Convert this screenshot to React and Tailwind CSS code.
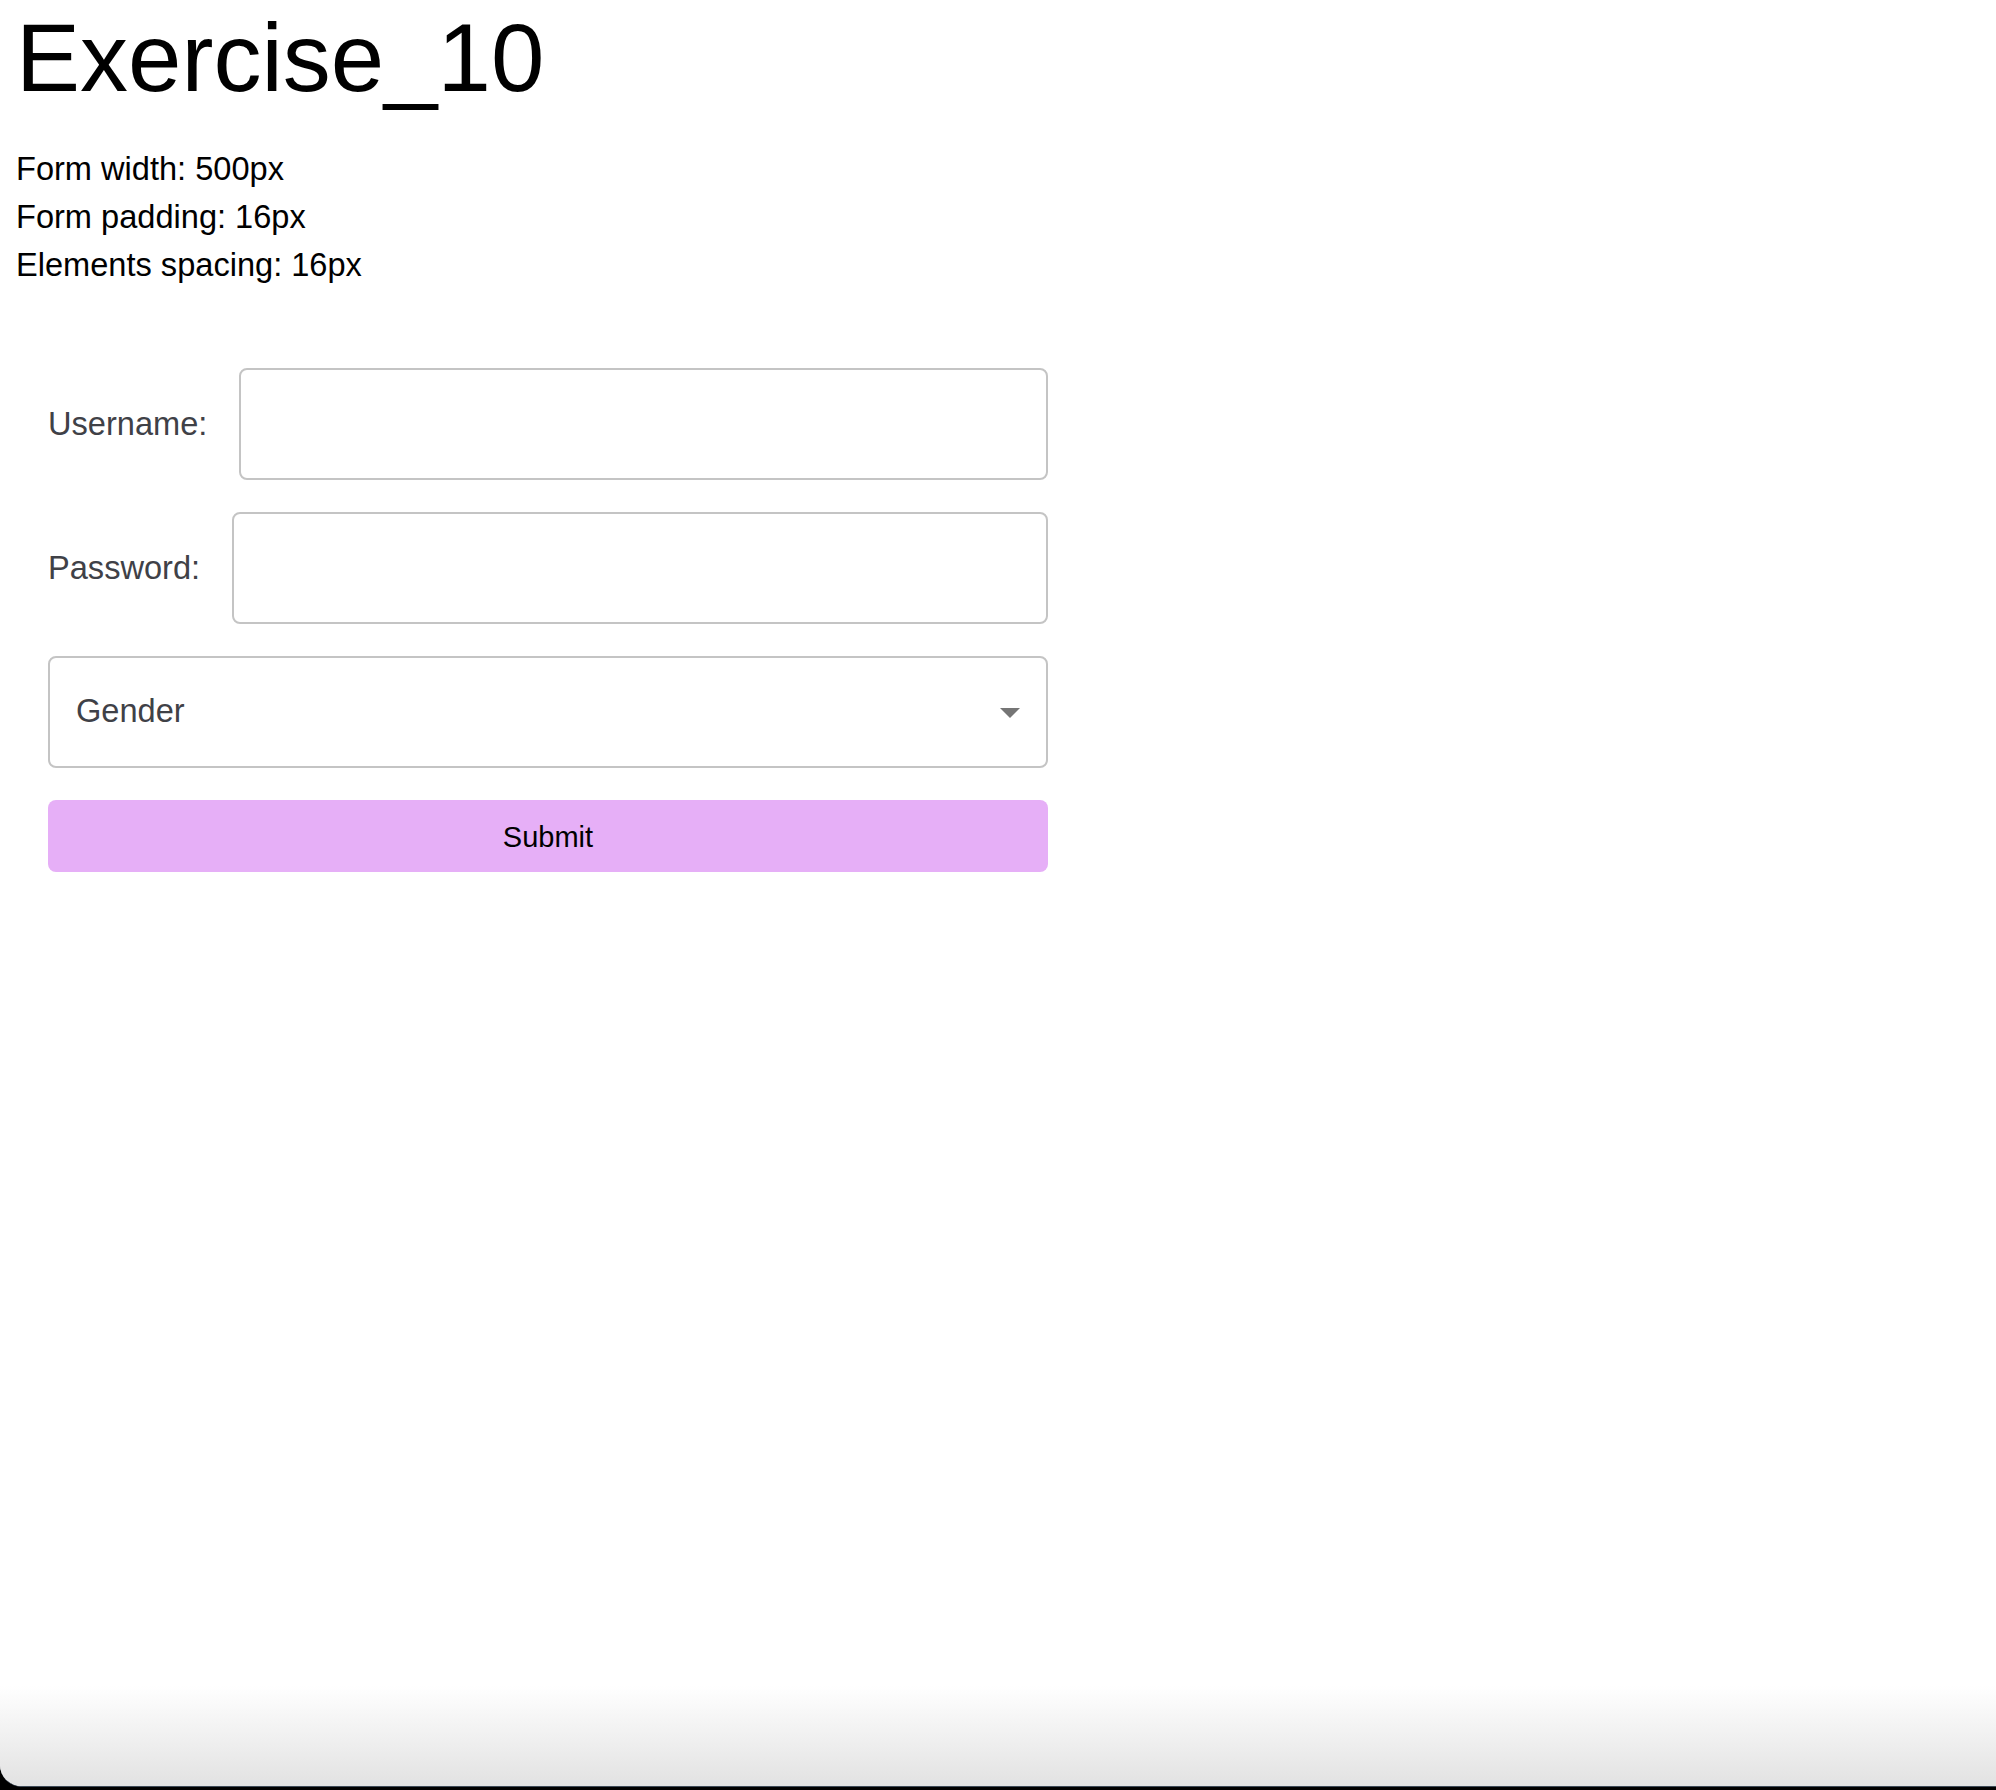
export default function App() {
  return (
    <div className="h-[1790px] flex flex-col bg-black font-['Liberation_Sans',Arial,sans-serif]">
      <div className="flex-1 flex flex-col bg-white rounded-bl-[22px] overflow-hidden border-b border-[#3e4a57]">
        <div className="px-[16px]">
          <h1 className="text-[96px] leading-[110px] mt-[3px] text-black font-normal">Exercise_10</h1>
          <div className="mt-[32px] text-[32.6px] leading-[48px] text-black">
            <div>Form width: 500px</div>
            <div>Form padding: 16px</div>
            <div>Elements spacing: 16px</div>
          </div>
          <form className="mt-[47px] w-[1064px] p-[32px] flex flex-col gap-[32px]" onSubmit={(e) => e.preventDefault()}>
            <div className="flex items-center gap-[32px]">
              <label className="text-[32.6px] text-[#3f4147]">Username:</label>
              <input type="text" className="flex-1 h-[112px] border-2 border-[#c4c4c4] rounded-[8px] px-[28px] text-[32px] outline-none" />
            </div>
            <div className="flex items-center gap-[32px]">
              <label className="text-[32.6px] text-[#3f4147]">Password:</label>
              <input type="password" className="flex-1 h-[112px] border-2 border-[#c4c4c4] rounded-[8px] px-[28px] text-[32px] outline-none" />
            </div>
            <div className="relative h-[112px] border-2 border-[#c4c4c4] rounded-[8px] flex items-center pl-[26px] pb-[2px]">
              <span className="text-[32.6px] text-[#3f4147]">Gender</span>
              <svg className="absolute right-[12px] top-1/2 -translate-y-1/2" width="48" height="48" viewBox="0 0 24 24">
                <path d="M7 10l5 5 5-5z" fill="#757575" />
              </svg>
            </div>
            <button type="submit" className="h-[72px] rounded-[8px] bg-[#e6aff7] text-[29px] text-black pt-[3px]">Submit</button>
          </form>
        </div>
        <div className="mt-auto h-[100px] bg-linear-to-b from-white to-[#e2e2e2]" />
      </div>
      <div className="h-[3px]" />
    </div>
  );
}
